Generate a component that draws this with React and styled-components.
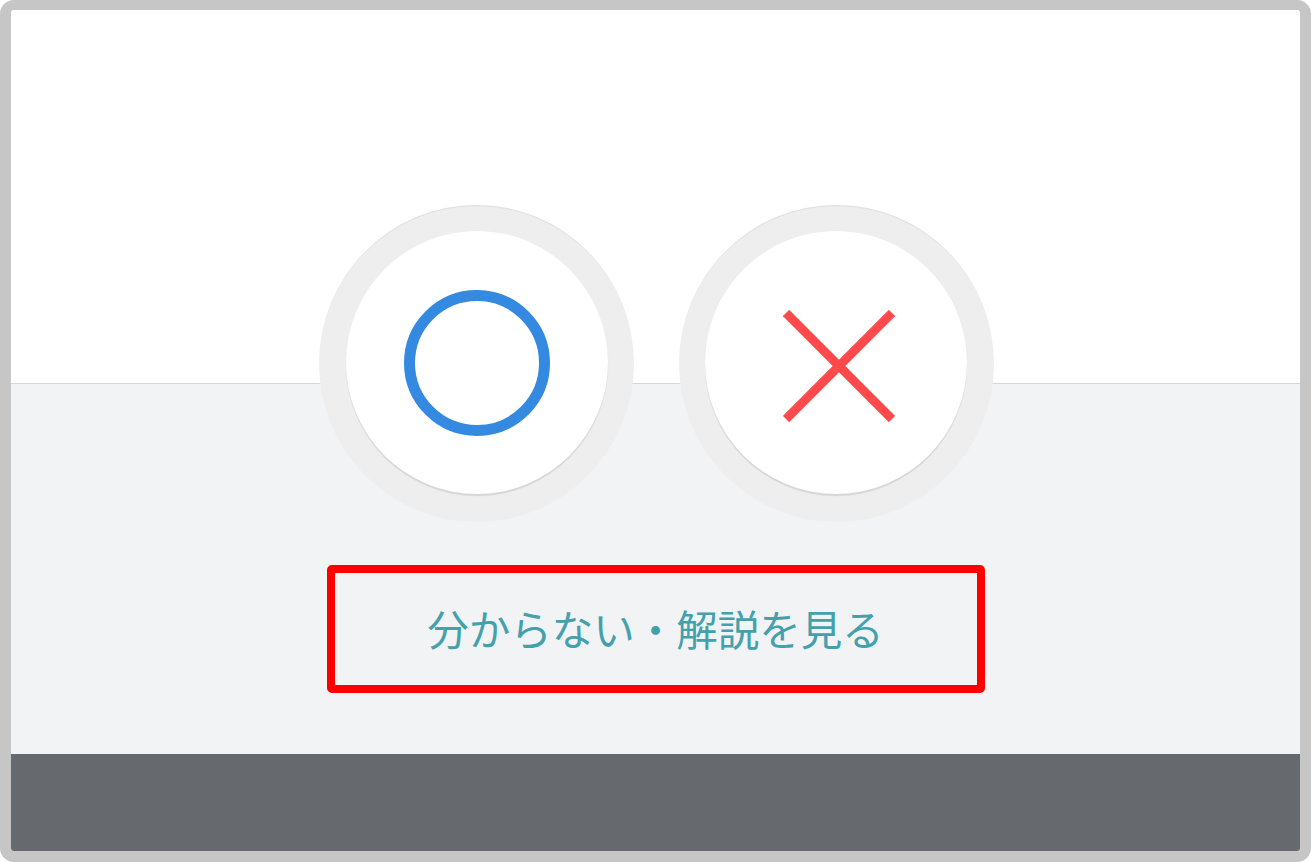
import React from "react";
import styled, { createGlobalStyle } from "styled-components";

const Global = createGlobalStyle`
  html, body { margin: 0; padding: 0; background: #ffffff; }
  body { font-family: "Noto Sans CJK JP", "Noto Sans", sans-serif; }
  * { box-sizing: border-box; }
`;

const Frame = styled.div`
  width: 1311px;
  height: 862px;
  border: 11px solid #c6c6c6;
  border-top-width: 10px;
  border-radius: 14px;
  display: flex;
  flex-direction: column;
  overflow: hidden;
  background: #ffffff;
`;

const Stage = styled.main`
  flex: 1;
  display: flex;
  flex-direction: column;
  align-items: center;
  padding-top: 195px;
  gap: 43px;
  background: linear-gradient(
    to bottom,
    #ffffff 0,
    #ffffff 373px,
    #cfd8e4 373px,
    #cfd8e4 374px,
    #f2f3f5 374px
  );
`;

const Choices = styled.div`
  display: flex;
  gap: 45px;
  margin-left: 1px;
`;

const Ring = styled.button`
  width: 315px;
  height: 317px;
  border-radius: 50%;
  border: none;
  padding: 0;
  background: #eeeeee;
  box-shadow: inset 0 2px 1px -1px rgba(0, 0, 0, 0.07);
  display: flex;
  align-items: center;
  justify-content: center;
  cursor: pointer;
`;

const Face = styled.span`
  width: 262px;
  height: 263px;
  border-radius: 50%;
  background: #ffffff;
  box-shadow: 0 2px 1px rgba(0, 0, 0, 0.1);
  display: flex;
  align-items: center;
  justify-content: center;
  margin-top: -3px;
  margin-left: ${(p) => p.$shiftX || 0}px;
`;

const Mark = styled.svg`
  display: block;
  margin-left: ${(p) => p.$dx || 0}px;
  margin-top: ${(p) => p.$dy || 0}px;
`;

const ExplainButton = styled.button`
  width: 658px;
  height: 128px;
  border: 8px solid #ff0000;
  border-radius: 5px;
  background: transparent;
  color: #43a1ad;
  font-family: "Noto Sans CJK JP", "Noto Sans", sans-serif;
  font-weight: 400;
  font-size: 41.5px;
  line-height: 1;
  display: flex;
  align-items: center;
  justify-content: center;
  padding: 0;
  cursor: pointer;
`;

const Footer = styled.footer`
  height: 97px;
  background: #66696d;
  flex-shrink: 0;
`;

export default function App() {
  return (
    <>
      <Global />
      <Frame>
        <Stage>
          <Choices>
            <Ring aria-label="正解">
              <Face $shiftX={2}>
                <Mark width="146" height="146" viewBox="0 0 146 146" $dy={1}>
                  <circle cx="73" cy="73" r="67.5" fill="none" stroke="#3489e0" strokeWidth="11" />
                </Mark>
              </Face>
            </Ring>
            <Ring aria-label="不正解">
              <Face $shiftX={0}>
                <Mark width="112" height="112" viewBox="0 0 112 112" $dx={5} $dy={8}>
                  <line x1="3" y1="3" x2="109" y2="109" stroke="#ff4a4b" strokeWidth="9" />
                  <line x1="109" y1="3" x2="3" y2="109" stroke="#ff4a4b" strokeWidth="9" />
                </Mark>
              </Face>
            </Ring>
          </Choices>
          <ExplainButton>分からない・解説を見る</ExplainButton>
        </Stage>
        <Footer />
      </Frame>
    </>
  );
}
